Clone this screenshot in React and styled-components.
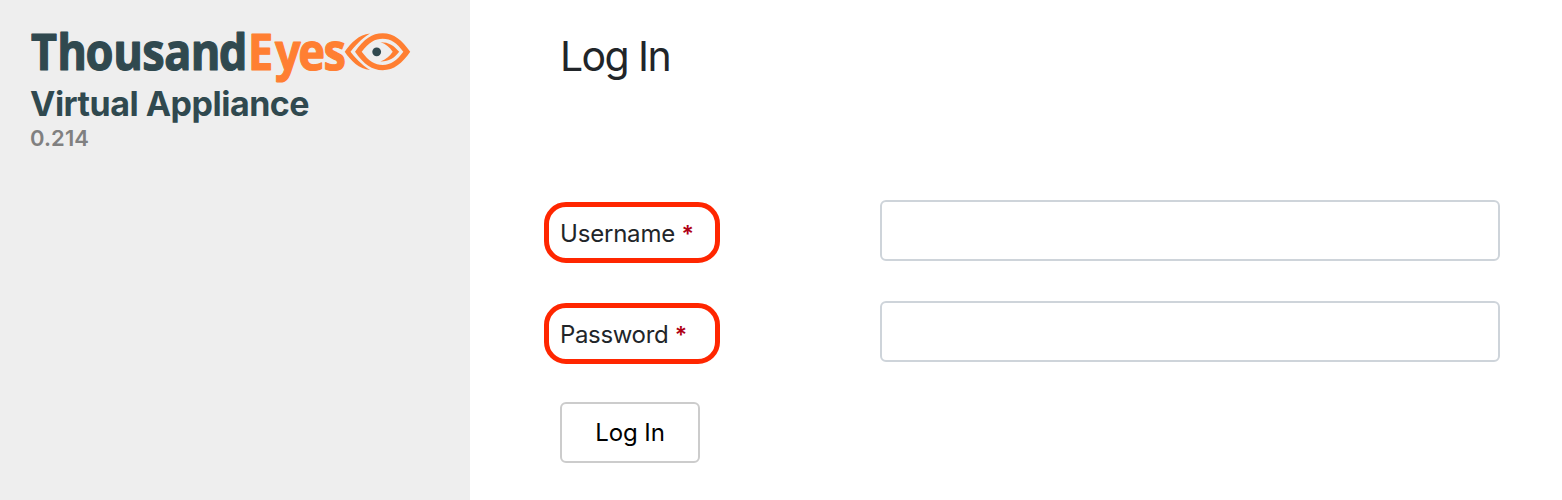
import React from "react";
import styled, { createGlobalStyle } from "styled-components";

const GlobalStyle = createGlobalStyle`
  *, *::before, *::after { box-sizing: border-box; }
  body {
    margin: 0;
    background: #fff;
    color: #212529;
    font-family: Inter, "Liberation Sans", sans-serif;
  }
`;

const Page = styled.div`
  display: grid;
  grid-template-columns: 470px 1fr;
  height: 500px;
  overflow: hidden;
`;

const Sidebar = styled.aside`
  background: #eee;
  padding: 20px 30px;
`;

const LogoSvg = styled.svg`
  display: block;
  width: 384px;
  height: 64px;
  overflow: visible;
`;

const LogoText = styled.text`
  font: 700 50px "Noto Sans", sans-serif;
  fill: ${(p) => p.$color};
  stroke: ${(p) => p.$color};
  stroke-width: 1.2;
  stroke-linejoin: round;
`;

const Product = styled.h2`
  margin: 0;
  font-size: 34px;
  font-weight: 700;
  line-height: 40px;
  letter-spacing: -0.5px;
  color: #30494f;
  white-space: nowrap;
`;

const Version = styled.div`
  font-size: 22px;
  font-weight: 600;
  line-height: 28px;
  letter-spacing: 0.1px;
  color: #808080;
`;

const Main = styled.main`
  padding: 32px 62px 0 90px;
`;

const Title = styled.h1`
  margin: 0 0 120px;
  font-size: 41px;
  font-weight: 400;
  line-height: 48px;
  letter-spacing: -1.6px;
`;

const Form = styled.form`
  display: flex;
  flex-direction: column;
  align-items: stretch;
  gap: 40px;
`;

const Field = styled.div`
  display: grid;
  grid-template-columns: 320px 620px;
  height: 61px;
`;

const Label = styled.label`
  display: flex;
  align-items: center;
  justify-self: start;
  width: 176px;
  height: 61px;
  margin: 2px 0 0 -16px;
  padding: 3px 0 0 11px;
  border: 5px solid #ff2600;
  border-radius: 22px;
  font-size: 24px;
  line-height: 30px;
  letter-spacing: ${(p) => p.$tracking};
  white-space: pre;
`;

const Required = styled.span`
  color: #b00015;
  font-size: 23px;
  font-weight: 600;
`;

const Input = styled.input`
  width: 620px;
  height: 61px;
  padding: 0 20px;
  border: 2px solid #ced4da;
  border-radius: 6px;
  background: #fff;
  font: inherit;
  font-size: 24px;
  outline: none;
`;

const Submit = styled.button`
  align-self: flex-start;
  width: 140px;
  height: 61px;
  padding: 0;
  border: 2px solid #ccc;
  border-radius: 6px;
  background: #fff;
  color: #000;
  font-family: inherit;
  font-size: 24px;
  letter-spacing: -0.1px;
`;

const CONDENSE = 0.9;
const glyphStops = (stops) => stops.map((x) => (x / CONDENSE).toFixed(2)).join(" ");

function Logo() {
  return (
    <LogoSvg viewBox="30 20 384 64">
      <g transform={`scale(${CONDENSE} 1)`}>
        <LogoText x={glyphStops([31, 57.6, 85.6, 113.5, 142.3, 164.2, 191, 218.8])} y="70" $color="#30494f">
          Thousand
        </LogoText>
        <LogoText x={glyphStops([248, 275, 298.3, 323.6])} y="70" $color="#ff7f32">
          Eyes
        </LogoText>
      </g>
      <g fill="#ff7f32">
        <path d="M370 33.6 C359 34.5 351 43 344.7 51.8 C351 61 359 69 370 70 C365 67 358 61.5 350.5 51.8 C358 42 365 36.5 370 33.6Z" />
        <path
          fillRule="evenodd"
          d="M355 51.8 C364 39 372 33.2 382.7 33.2 C394 33.2 402 40 410.2 51.8 C402 63.5 394 70.2 382.7 70.2 C372 70.2 364 64.5 355 51.8Z M361.7 51.8 C369 61.5 375 65 382.7 65 C391 65 397 60.5 403.3 51.8 C397 43 391 38.7 382.7 38.7 C375 38.7 369 42 361.7 51.8Z"
        />
        <path d="M380.5 42.2 C389 42.2 394 45.5 399.2 51.8 C394 58.5 389 61.5 380.5 61.4 C386 59.5 389.5 56.5 392.7 51.8 C389.5 47 386 44 380.5 42.2Z" />
      </g>
      <circle cx="376.7" cy="51.8" r="4.4" fill="#30494f" />
    </LogoSvg>
  );
}

function FormField({ id, label, type, tracking }) {
  return (
    <Field>
      <Label htmlFor={id} $tracking={tracking}>
        {label} <Required>*</Required>
      </Label>
      <Input id={id} type={type} />
    </Field>
  );
}

export default function App() {
  return (
    <>
      <GlobalStyle />
      <Page>
        <Sidebar>
          <Logo />
          <Product>Virtual Appliance</Product>
          <Version>0.214</Version>
        </Sidebar>
        <Main>
          <Title>Log In</Title>
          <Form>
            <FormField id="username" label="Username" type="text" tracking="-0.2px" />
            <FormField id="password" label="Password" type="password" tracking="-0.35px" />
            <Submit type="button">Log In</Submit>
          </Form>
        </Main>
      </Page>
    </>
  );
}
